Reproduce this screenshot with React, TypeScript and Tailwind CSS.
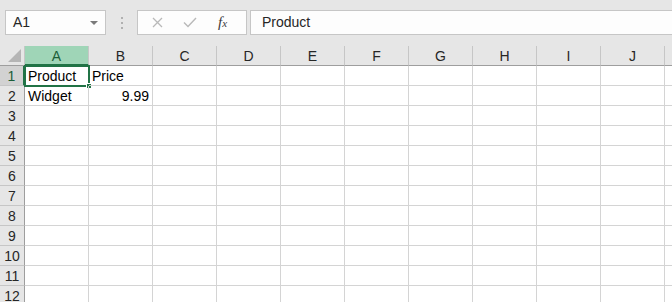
import React from "react";

const cols = ["A", "B", "C", "D", "E", "F", "G", "H", "I", "J", "K"];
const rows = [1, 2, 3, 4, 5, 6, 7, 8, 9, 10, 11, 12];

const data: Record<string, { v: string; right?: boolean }> = {
  A1: { v: "Product" },
  B1: { v: "Price" },
  A2: { v: "Widget" },
  B2: { v: "9.99", right: true },
};

const Toolbar = () => (
  <div className="flex h-[46px] items-start bg-[#e6e6e6] pt-[10px] pl-[5px]">
    <div className="relative flex h-[25px] w-[101px] items-center border border-[#c6c6c6] bg-[#fdfdfd] pl-[7px] text-[14px] text-[#262626]">
      A1
      <span className="absolute right-[7px] top-[10px] h-0 w-0 border-x-[4px] border-t-[4px] border-x-transparent border-t-[#7a7a7a]" />
    </div>
    <div className="ml-[14px] flex h-[25px] w-[3px] flex-col items-center justify-center gap-[3px]">
      <span className="h-[2px] w-[2px] bg-[#b0b0b0]" />
      <span className="h-[2px] w-[2px] bg-[#b0b0b0]" />
      <span className="h-[2px] w-[2px] bg-[#b0b0b0]" />
    </div>
    <div className="ml-[14px] flex h-[25px] w-[110px] items-center border border-[#c6c6c6] bg-[#fdfdfd]">
      <svg className="ml-[14px]" width="11" height="11" viewBox="0 0 11 11">
        <path d="M1 1L10 10M10 1L1 10" stroke="#b9b9b9" strokeWidth="1.3" fill="none" />
      </svg>
      <svg className="ml-[20px]" width="14" height="11" viewBox="0 0 14 11">
        <path d="M1 5.5L5 9.5L13 1" stroke="#b9b9b9" strokeWidth="1.4" fill="none" />
      </svg>
      <span className="ml-[21px] font-['Liberation_Serif',serif] text-[15px] italic leading-none text-[#3c3c3c]">
        f<span className="text-[11px]">x</span>
      </span>
    </div>
    <div className="ml-[3px] flex h-[25px] flex-1 items-center border border-r-0 border-[#c6c6c6] bg-[#fdfdfd] pl-[11px] text-[14px] text-[#262626]">
      Product
    </div>
  </div>
);

const Grid = () => (
  <div className="grid grid-cols-[25px_repeat(11,64px)] auto-rows-[20px] bg-white font-['Liberation_Sans',Arial,sans-serif]">
    <div className="relative border-b border-r border-b-[#9e9e9e] border-r-[#c6c6c6] bg-[#e6e6e6]">
      <span className="absolute bottom-[3px] right-[3px] h-0 w-0 border-b-[13px] border-l-[13px] border-b-[#b5b5b5] border-l-transparent" />
    </div>
    {cols.map((c) => (
      <div
        key={c}
        className={
          c === "A"
            ? "flex items-center justify-center border-b-2 border-r border-b-[#217346] border-r-[#c6c6c6] bg-[#9fd5b7] pt-[2px] text-[14px] text-[#1c5e38]"
            : "flex items-center justify-center border-b border-r border-b-[#9e9e9e] border-r-[#c6c6c6] bg-[#e6e6e6] pt-[1px] text-[14px] text-[#262626]"
        }
      >
        {c === "K" ? "" : c}
      </div>
    ))}
    {rows.map((r) => (
      <React.Fragment key={r}>
        <div
          className={
            r === 1
              ? "flex items-center justify-center border-b border-r-2 border-b-[#c6c6c6] border-r-[#217346] bg-[#d2d2d2] pt-[1px] text-[14px] text-[#1c5e38]"
              : "flex items-center justify-center border-b border-r border-b-[#c6c6c6] border-r-[#9e9e9e] bg-[#e6e6e6] pt-[1px] text-[14px] text-[#262626]"
          }
        >
          {r}
        </div>
        {cols.map((c) => {
          const cell = data[c + r];
          return (
            <div
              key={c}
              className={
                "relative flex items-center border-b border-r border-[#d4d4d4] px-[3px] pt-[2px] text-[14px] text-black " +
                (cell?.right ? "justify-end" : "justify-start")
              }
            >
              {cell?.v}
              {c === "A" && r === 1 && (
                <span className="absolute -left-px -top-px h-[22px] w-[66px] border-2 border-[#217346]">
                  <span className="absolute -bottom-[4px] -right-[4px] h-[6px] w-[6px] border border-white bg-[#217346]" />
                </span>
              )}
            </div>
          );
        })}
      </React.Fragment>
    ))}
  </div>
);

export default function App() {
  return (
    <div className="h-[302px] w-[672px] overflow-hidden bg-white font-['Liberation_Sans',Arial,sans-serif]">
      <Toolbar />
      <Grid />
    </div>
  );
}
